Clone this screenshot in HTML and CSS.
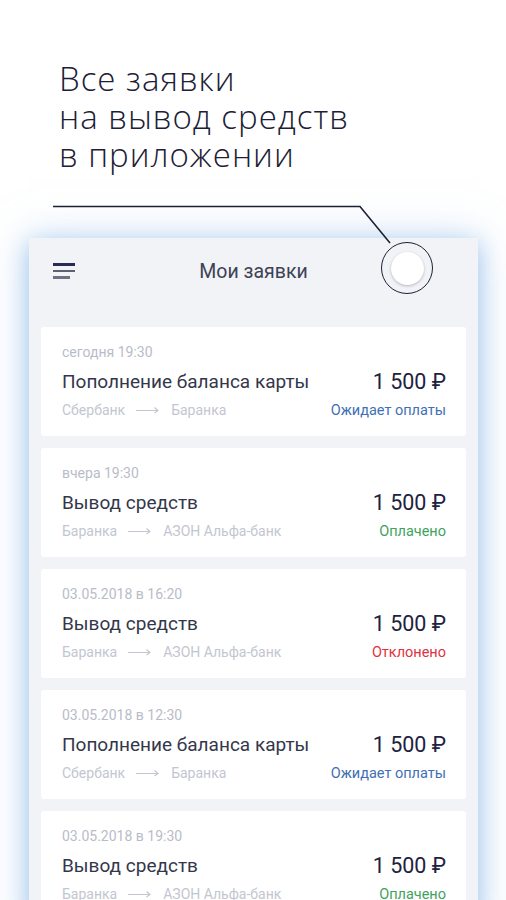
FILE: index.html
```html
<!DOCTYPE html>
<html lang="ru">
<head>
<meta charset="utf-8">
<title>Мои заявки</title>
<link rel="stylesheet" href="styles.css">
</head>
<body>
<div class="page">
  <h1 class="promo">Все заявки<br>на вывод средств<br>в приложении</h1>

  <!-- callout line pointing at the button -->
  <svg class="callout" width="506" height="260" viewBox="0 0 506 260">
    <polyline points="53,206.5 360,206.5 390,243" fill="none" stroke="#1c2035" stroke-width="1.6"/>
  </svg>

  <div class="phone">
    <div class="topbar">
      <div class="burger"><span></span><span></span><span></span></div>
      <div class="title">Мои заявки</div>
      <div class="ring"><div class="knob"></div></div>
    </div>

    <div class="list">
      <div class="card">
        <div class="date">сегодня 19:30</div>
        <div class="row"><span class="name">Пополнение баланса карты</span><span class="sum">1 500 ₽</span></div>
        <div class="row small">
          <span class="route">Сбербанк <svg class="arr" width="24" height="8" viewBox="0 0 24 8"><path d="M0 4.5H22M18.5 1.5L22 4.5L18.5 7" fill="none" stroke="#c3c6d0" stroke-width="1.1"/></svg> Баранка</span>
          <span class="status wait">Ожидает оплаты</span>
        </div>
      </div>

      <div class="card">
        <div class="date">вчера 19:30</div>
        <div class="row"><span class="name">Вывод средств</span><span class="sum">1 500 ₽</span></div>
        <div class="row small">
          <span class="route">Баранка <svg class="arr" width="24" height="8" viewBox="0 0 24 8"><path d="M0 4.5H22M18.5 1.5L22 4.5L18.5 7" fill="none" stroke="#c3c6d0" stroke-width="1.1"/></svg> АЗОН Альфа-банк</span>
          <span class="status paid">Оплачено</span>
        </div>
      </div>

      <div class="card">
        <div class="date">03.05.2018 в 16:20</div>
        <div class="row"><span class="name">Вывод средств</span><span class="sum">1 500 ₽</span></div>
        <div class="row small">
          <span class="route">Баранка <svg class="arr" width="24" height="8" viewBox="0 0 24 8"><path d="M0 4.5H22M18.5 1.5L22 4.5L18.5 7" fill="none" stroke="#c3c6d0" stroke-width="1.1"/></svg> АЗОН Альфа-банк</span>
          <span class="status declined">Отклонено</span>
        </div>
      </div>

      <div class="card">
        <div class="date">03.05.2018 в 12:30</div>
        <div class="row"><span class="name">Пополнение баланса карты</span><span class="sum">1 500 ₽</span></div>
        <div class="row small">
          <span class="route">Сбербанк <svg class="arr" width="24" height="8" viewBox="0 0 24 8"><path d="M0 4.5H22M18.5 1.5L22 4.5L18.5 7" fill="none" stroke="#c3c6d0" stroke-width="1.1"/></svg> Баранка</span>
          <span class="status wait">Ожидает оплаты</span>
        </div>
      </div>

      <div class="card">
        <div class="date">03.05.2018 в 19:30</div>
        <div class="row"><span class="name">Вывод средств</span><span class="sum">1 500 ₽</span></div>
        <div class="row small">
          <span class="route">Баранка <svg class="arr" width="24" height="8" viewBox="0 0 24 8"><path d="M0 4.5H22M18.5 1.5L22 4.5L18.5 7" fill="none" stroke="#c3c6d0" stroke-width="1.1"/></svg> АЗОН Альфа-банк</span>
          <span class="status paid">Оплачено</span>
        </div>
      </div>
    </div>
  </div>
</div>
</body>
</html>
```

FILE: styles.css
```css
body {
  margin: 0;
  background: #fff;
  font-family: Roboto, "Liberation Sans", sans-serif;
}
.page {
  position: relative;
  height: 900px;
  overflow: hidden;
}
.promo {
  margin: 0;
  padding: 60px 0 0 59px;
  font-family: "Open Sans", sans-serif;
  font-weight: 350;
  font-size: 33px;
  line-height: 38px;
  letter-spacing: 1px;
  color: #1c2035;
}
.callout {
  position: absolute;
  left: 0;
  top: 0;
  z-index: 2;
}

.phone {
  margin: 64px 28px 0 29px;
  height: 700px;
  background: #f1f3f7;
  box-shadow: 0 6px 22px rgba(120, 170, 230, 0.6), 0 0 40px rgba(170, 205, 240, 0.5);
}
.topbar {
  height: 66px;
  display: grid;
  grid-template-columns: 1fr auto 1fr;
  align-items: center;
}
.burger {
  padding-left: 24px;
  display: flex;
  flex-direction: column;
  gap: 4px;
}
.burger span {
  display: block;
  width: 22px;
  height: 2.4px;
  background: #5d6172;
}
.burger span:first-child { background: #262a55; }
.burger span:last-child { width: 17px; background: #6e7282; }
.title {
  font-size: 19.5px;
  color: #3d4154;
}
.ring {
  justify-self: end;
  align-self: start;
  margin: 4px 45px 0 0;
  width: 50px;
  height: 50px;
  border: 1.6px solid #1c2035;
  border-radius: 50%;
  display: flex;
  align-items: center;
  justify-content: center;
  position: relative;
  z-index: 3;
}
.knob {
  width: 33px;
  height: 33px;
  border-radius: 50%;
  background: #fff;
  box-shadow: 0 1px 3px rgba(0, 0, 0, 0.25);
}

.list {
  padding: 23px 12px 0;
  display: flex;
  flex-direction: column;
  gap: 12px;
}
.card {
  background: #fff;
  border-radius: 3px;
  height: 109px;
  box-sizing: border-box;
  padding: 16px 20px 0 21px;
}
.date {
  font-size: 14px;
  line-height: 18px;
  color: #b9bcc8;
}
.row {
  display: flex;
  justify-content: space-between;
  align-items: center;
  margin-top: 7px;
  height: 26px;
}
.row.small { height: 18px; }
.name {
  font-size: 19px;
  color: #34374a;
}
.sum {
  font-size: 21.5px;
  color: #1d2240;
}
.route {
  font-size: 14px;
  color: #c3c6d1;
  display: flex;
  align-items: center;
  gap: 11px;
}
.status { font-size: 14.5px; }
.wait { color: #3f70b5; }
.paid { color: #3ea35c; }
.declined { color: #e0333f; }
```
